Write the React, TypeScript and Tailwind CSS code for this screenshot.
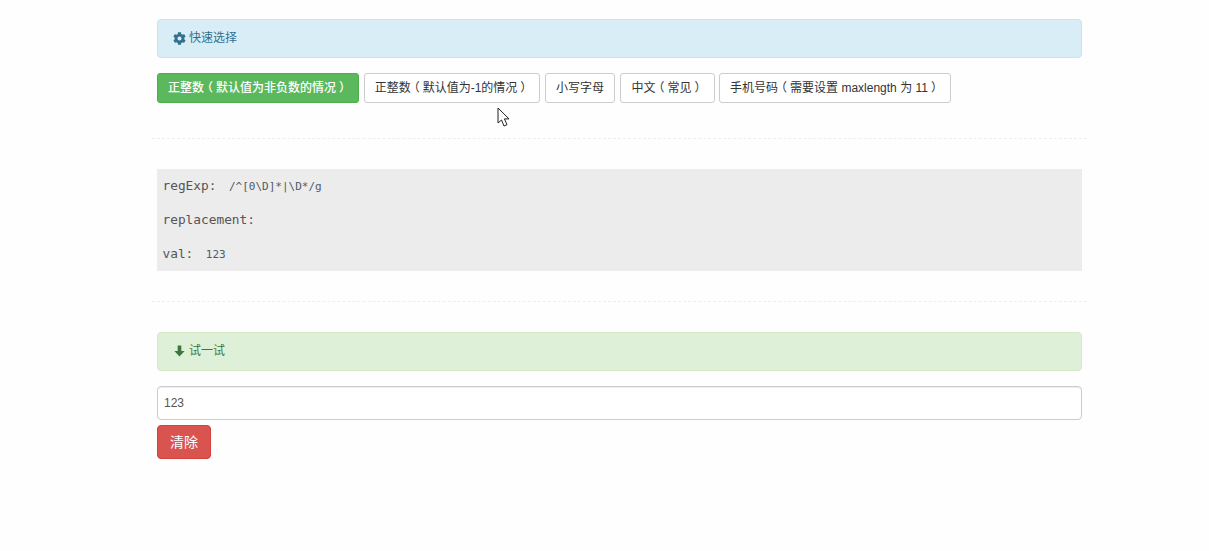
import { FaCog } from 'react-icons/fa';

const sans = "font-['Liberation_Sans','Noto_Sans_CJK_SC',sans-serif]";

const choices = [
  { text: '正整数（默认值为-1的情况）', width: 'w-[176px]' },
  { text: '小写字母', width: 'w-[70px]' },
  { text: '中文（常见）', width: 'w-[95px]' },
  { text: '手机号码（需要设置 maxlength 为 11）', width: 'w-[232px]' },
];

// the full-width brackets sit mid-cell in the original font
function Label({ text }: { text: string }) {
  return (
    <>
      {text.split(/([（）])/).map((part, i) =>
        part === '（' || part === '）' ? (
          <span key={i} className="inline-block w-[12px] text-center [font-feature-settings:'halt']">
            {part}
          </span>
        ) : (
          part
        )
      )}
    </>
  );
}

function Row({ label, value }: { label: string; value?: string }) {
  return (
    <div className="h-[34px] flex items-baseline leading-[34px] whitespace-pre">
      <span className="text-[12.8px] text-[#555]">{label}</span>
      {value && <span className="text-[11px] text-[#4f5b66] ml-[12.5px]">{value}</span>}
    </div>
  );
}

export default function App() {
  return (
    <div className={`relative min-h-[551px] bg-[#fefefe] pt-[19px] text-[#333] ${sans}`}>
      <div className="w-[935px] ml-[152px]">
        <div className="mx-[5px]">
          <div className="h-[39px] flex items-center pl-[15px] pb-[1px] gap-[3px] rounded-[4px] border border-[#bce8f1] bg-[#d9edf7] text-[12px] text-[#31708f]">
            <FaCog className="w-[13px] h-[13px]" />
            <span>快速选择</span>
          </div>
          <div className="flex mt-[15px]">
            <button className="h-[30px] w-[202px] rounded-[3px] border border-[#4cae4c] bg-[#5cb85c] text-[12px] font-medium text-white whitespace-nowrap">
              <Label text="正整数（默认值为非负数的情况）" />
            </button>
            <div className="flex gap-[5px] ml-[5px]">
              {choices.map((c) => (
                <button
                  key={c.text}
                  className={`h-[30px] ${c.width} rounded-[3px] border border-[#ccc] bg-white text-[12px] text-[#333] whitespace-nowrap last:-ml-[1px]`}
                >
                  <Label text={c.text} />
                </button>
              ))}
            </div>
          </div>
        </div>
        <hr className="mt-[35px] mb-[30px] border-0 border-t border-dashed border-[#eee]" />
        <div className="mx-[5px] bg-[#ececec] px-[5.5px] font-['DejaVu_Sans_Mono',monospace]">
          <Row label="regExp:" value="/^[0\D]*|\D*/g" />
          <Row label="replacement:" />
          <Row label="val:" value="123" />
        </div>
        <hr className="mt-[30px] mb-[30px] border-0 border-t border-dashed border-[#eee]" />
        <div className="mx-[5px]">
          <div className="h-[39px] flex items-center pl-[16px] pb-[1px] gap-[4px] rounded-[4px] border border-[#d6e9c6] bg-[#dff0d8] text-[12px] text-[#3c763d]">
            <svg viewBox="0 0 12 12" className="w-[11px] h-[12px]" fill="currentColor">
              <path d="M4 0h4v6h3.6L6 12 .4 6H4z" />
            </svg>
            <span>试一试</span>
          </div>
          <input
            readOnly
            value="123"
            className="block w-full h-[34px] mt-[15px] px-[6px] rounded-[4px] border border-[#ccc] bg-white text-[12px] text-[#555] shadow-[inset_0_1px_1px_rgba(0,0,0,0.075)] outline-none"
          />
          <button className="block w-[54px] h-[34px] mt-[5px] rounded-[4px] border border-[#d43f3a] bg-[#d9534f] text-[14px] text-white">
            清除
          </button>
        </div>
      </div>
      <svg viewBox="0 0 14 20" className="absolute left-[497px] top-[107px] w-[14px] h-[20px]">
        <path d="M1 1v15l3.5-3 2.5 6 3-1.3-2.6-5.8H12z" fill="#fff" stroke="#222" strokeWidth="1" strokeLinejoin="miter" />
      </svg>
    </div>
  );
}
